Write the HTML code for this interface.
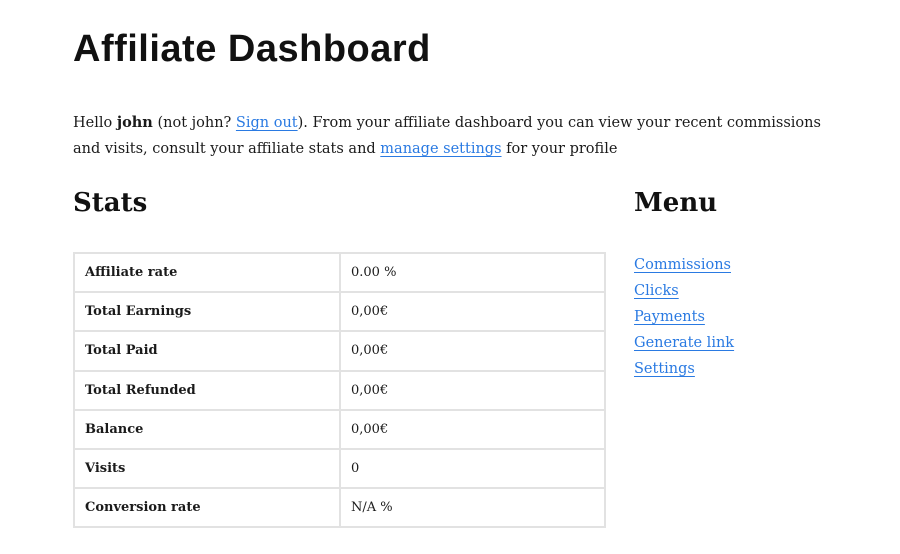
<!DOCTYPE html>
<html><head><meta charset="utf-8"><style>
body{margin:0;background:#fff;width:900px;height:554px;overflow:hidden;font-family:"DejaVu Serif","Liberation Serif",serif;color:#1a1a1a}
h1{position:absolute;left:73px;top:26px;margin:0;font-family:"Liberation Sans",sans-serif;font-weight:bold;font-size:38px;line-height:46px;letter-spacing:0.5px;color:#111}
p{position:absolute;left:73px;top:110px;margin:0;width:770px;font-size:14.5px;line-height:26px}
a{color:#2a7ae2;text-decoration:underline;text-underline-offset:3px}
h2{position:absolute;margin:0;font-size:26px;font-weight:bold;line-height:32px;color:#111}
table{position:absolute;left:73px;top:252px;width:533px;border-collapse:collapse;font-size:13px}
td{border:2px solid #e2e2e2;height:37.2px;padding:0 10px;}
td:first-child{font-weight:bold;width:244px}
.menu{position:absolute;left:634px;top:252px;font-size:14.5px;line-height:26px}
</style></head><body>
<h1>Affiliate Dashboard</h1>
<p>Hello <b>john</b> (not john? <a>Sign out</a>). From your affiliate dashboard you can view your recent commissions<br>and visits, consult your affiliate stats and <a>manage settings</a> for your profile</p>
<h2 style="left:73px;top:187px">Stats</h2>
<h2 style="left:634px;top:187px">Menu</h2>
<table>
<tr><td>Affiliate rate</td><td>0.00 %</td></tr>
<tr><td>Total Earnings</td><td>0,00€</td></tr>
<tr><td>Total Paid</td><td>0,00€</td></tr>
<tr><td>Total Refunded</td><td>0,00€</td></tr>
<tr><td>Balance</td><td>0,00€</td></tr>
<tr><td>Visits</td><td>0</td></tr>
<tr><td>Conversion rate</td><td>N/A %</td></tr>
</table>
<div class="menu"><a>Commissions</a><br><a>Clicks</a><br><a>Payments</a><br><a>Generate link</a><br><a>Settings</a></div>
</body></html>
